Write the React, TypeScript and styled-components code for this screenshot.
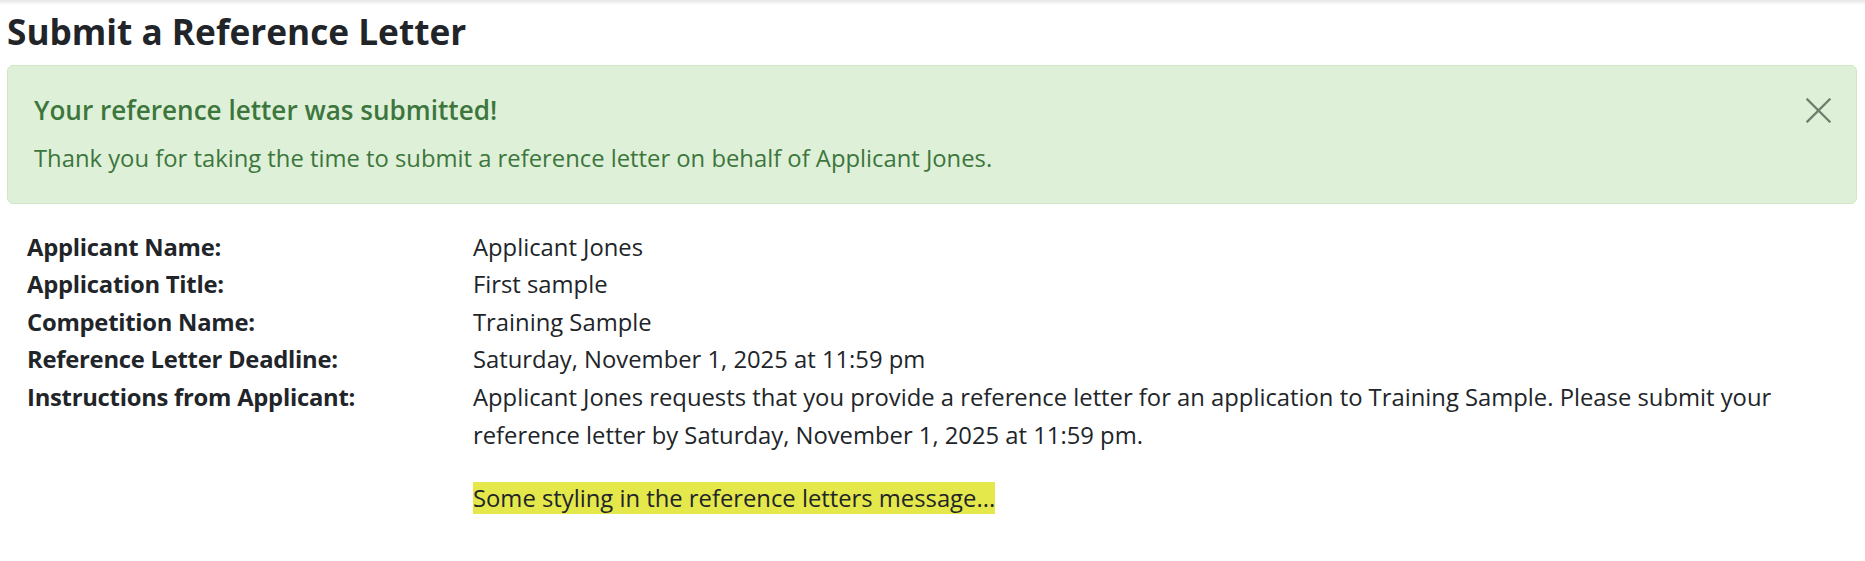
import React from 'react';
import styled, { createGlobalStyle } from 'styled-components';

const GlobalStyle = createGlobalStyle`
  html, body {
    margin: 0;
    padding: 0;
    background: #ffffff;
  }
  body {
    font-family: 'Open Sans', 'Noto Sans', Arial, sans-serif;
    color: #212529;
    font-size: 23.8px;
    line-height: 37.6px;
  }
`;

const Page = styled.div`
  display: flex;
  flex-direction: column;
  padding: 0 8px 40px 7px;
`;

const TopShadow = styled.div`
  height: 5px;
  background: linear-gradient(to bottom, rgba(0, 0, 0, 0.1), rgba(0, 0, 0, 0));
`;

const Title = styled.h2`
  margin: 6px 0 13px 0;
  font-size: 35.2px;
  line-height: 41px;
  font-weight: 700;
  color: #212529;
`;

const Alert = styled.div`
  display: flex;
  align-items: flex-start;
  gap: 20px;
  padding: 28px 25px 25px 26px;
  background-color: #dff0d8;
  border: 1px solid #d0e7c5;
  border-radius: 6px;
  color: #3c763d;
`;

const AlertBody = styled.div`
  display: flex;
  flex-direction: column;
  gap: 14px;
  flex-grow: 1;
`;

const AlertHeading = styled.h4`
  margin: 0;
  font-size: 26.1px;
  line-height: 32px;
  font-weight: 600;
`;

const AlertText = styled.p`
  margin: 0;
`;

const CloseButton = styled.button`
  display: flex;
  align-items: center;
  justify-content: center;
  margin-top: 4px;
  padding: 0;
  width: 25px;
  height: 25px;
  border: none;
  background: transparent;
  color: #6f7d6e;
  cursor: pointer;
`;

const Details = styled.div`
  display: grid;
  grid-template-columns: 446px 1fr;
  margin-top: 25px;
  padding-left: 20px;
`;

const Label = styled.div`
  font-weight: 700;
  letter-spacing: -0.25px;
`;

const Value = styled.div`
  display: flex;
  flex-direction: column;
  gap: 26px;
`;

const Paragraph = styled.p`
  margin: 0;
`;

const Highlight = styled.span`
  background-color: #e5e84b;
`;

const CloseIcon = () => (
  <svg width="25" height="25" viewBox="0 0 25 25" fill="none" stroke="currentColor" strokeWidth="2.3" strokeLinecap="square">
    <path d="M1.5 1.5 L23.5 23.5 M23.5 1.5 L1.5 23.5" />
  </svg>
);

const rows: { label: string; value: string }[] = [
  { label: 'Applicant Name:', value: 'Applicant Jones' },
  { label: 'Application Title:', value: 'First sample' },
  { label: 'Competition Name:', value: 'Training Sample' },
  { label: 'Reference Letter Deadline:', value: 'Saturday, November 1, 2025 at 11:59 pm' },
];

export default function App() {
  return (
    <>
      <GlobalStyle />
      <TopShadow />
      <Page>
        <Title>Submit a Reference Letter</Title>
        <Alert role="alert">
          <AlertBody>
            <AlertHeading>Your reference letter was submitted!</AlertHeading>
            <AlertText>
              Thank you for taking the time to submit a reference letter on behalf of Applicant Jones.
            </AlertText>
          </AlertBody>
          <CloseButton aria-label="Close">
            <CloseIcon />
          </CloseButton>
        </Alert>
        <Details>
          {rows.map((row) => (
            <React.Fragment key={row.label}>
              <Label>{row.label}</Label>
              <Value>{row.value}</Value>
            </React.Fragment>
          ))}
          <Label>Instructions from Applicant:</Label>
          <Value>
            <Paragraph>
              Applicant Jones requests that you provide a reference letter for an application to Training Sample.
              Please submit your reference letter by Saturday, November 1, 2025 at 11:59 pm.
            </Paragraph>
            <Paragraph>
              <Highlight>Some styling in the reference letters message...</Highlight>
            </Paragraph>
          </Value>
        </Details>
      </Page>
    </>
  );
}
